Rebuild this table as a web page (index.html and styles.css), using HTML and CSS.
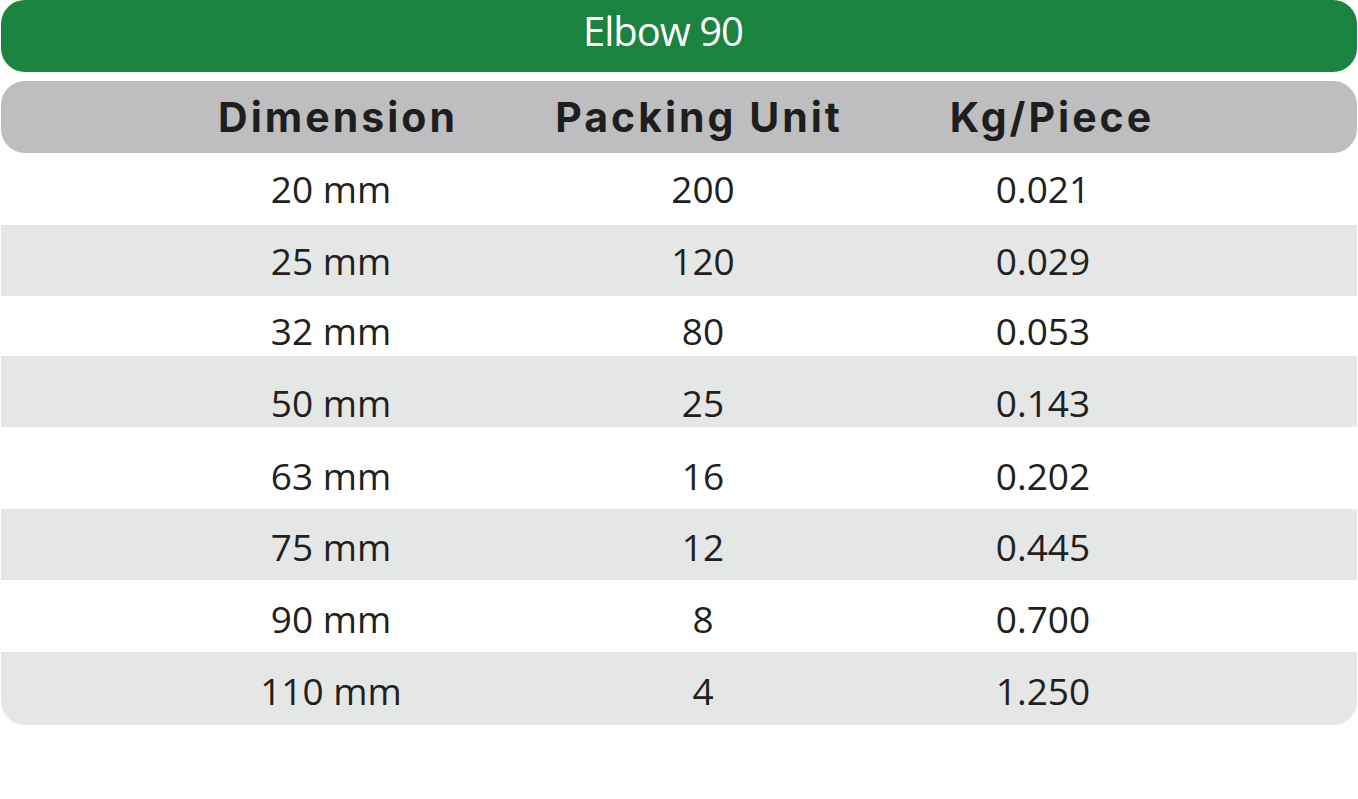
FILE: index.html
```html
<!DOCTYPE html>
<html lang="en">
<head>
<meta charset="utf-8">
<title>Elbow 90</title>
<link rel="stylesheet" href="styles.css">
</head>
<body>
<main class="sheet">
  <h1 class="title">Elbow 90</h1>
  <div class="table">
    <div class="head">
      <span>Dimension</span>
      <span>Packing Unit</span>
      <span>Kg/Piece</span>
    </div>
    <div class="row r1"><span>20 mm</span><span>200</span><span>0.021</span></div>
    <div class="row r2 alt"><span>25 mm</span><span>120</span><span>0.029</span></div>
    <div class="row r3"><span>32 mm</span><span>80</span><span>0.053</span></div>
    <div class="row r4 alt"><span>50 mm</span><span>25</span><span>0.143</span></div>
    <div class="row r5"><span>63 mm</span><span>16</span><span>0.202</span></div>
    <div class="row r6 alt"><span>75 mm</span><span>12</span><span>0.445</span></div>
    <div class="row r7"><span>90 mm</span><span>8</span><span>0.700</span></div>
    <div class="row r8 alt last"><span>110 mm</span><span>4</span><span>1.250</span></div>
  </div>
</main>
</body>
</html>
```

FILE: styles.css
```css
html, body {
  margin: 0;
  padding: 0;
  background: #ffffff;
}

.sheet {
  width: 1356px;
  margin-left: 1px;
  font-family: "Open Sans", "Liberation Sans", sans-serif;
  color: #231f20;
}

.title {
  margin: 0 0 9px 0;
  height: 72px;
  box-sizing: border-box;
  padding: 11px 32px 0 0;
  background: #1a8340;
  border-radius: 24px;
  color: #ffffff;
  font-weight: 400;
  font-size: 40px;
  line-height: 40px;
  letter-spacing: -1px;
  text-align: center;
}

.head {
  display: grid;
  grid-template-columns: 240px 482px 224px;
  align-items: center;
  height: 72px;
  padding-left: 217px;
  background: #bebec0;
  border-radius: 24px;
  font-family: "Inter", "DejaVu Sans", sans-serif;
  font-weight: 700;
  font-size: 41px;
  line-height: 41px;
  letter-spacing: 3px;
  color: #1f1e1f;
  text-align: center;
}

.row {
  display: grid;
  grid-template-columns: 240px 504px 176px;
  align-items: start;
  box-sizing: border-box;
  padding-left: 210px;
  font-size: 37px;
  line-height: 37px;
  text-align: center;
}

.alt {
  background: #e5e6e6;
}

.last {
  border-radius: 0 0 24px 24px;
}

.r1 { height: 72px; padding-top: 17px; }
.r2 { height: 71px; padding-top: 17px; }
.r3 { height: 60px; padding-top: 16px; }
.r4 { height: 71px; padding-top: 28px; }
.r5 { height: 82px; padding-top: 30px; }
.r6 { height: 71px; padding-top: 19px; }
.r7 { height: 72px; padding-top: 20px; }
.r8 { height: 73px; padding-top: 20px; }
```
